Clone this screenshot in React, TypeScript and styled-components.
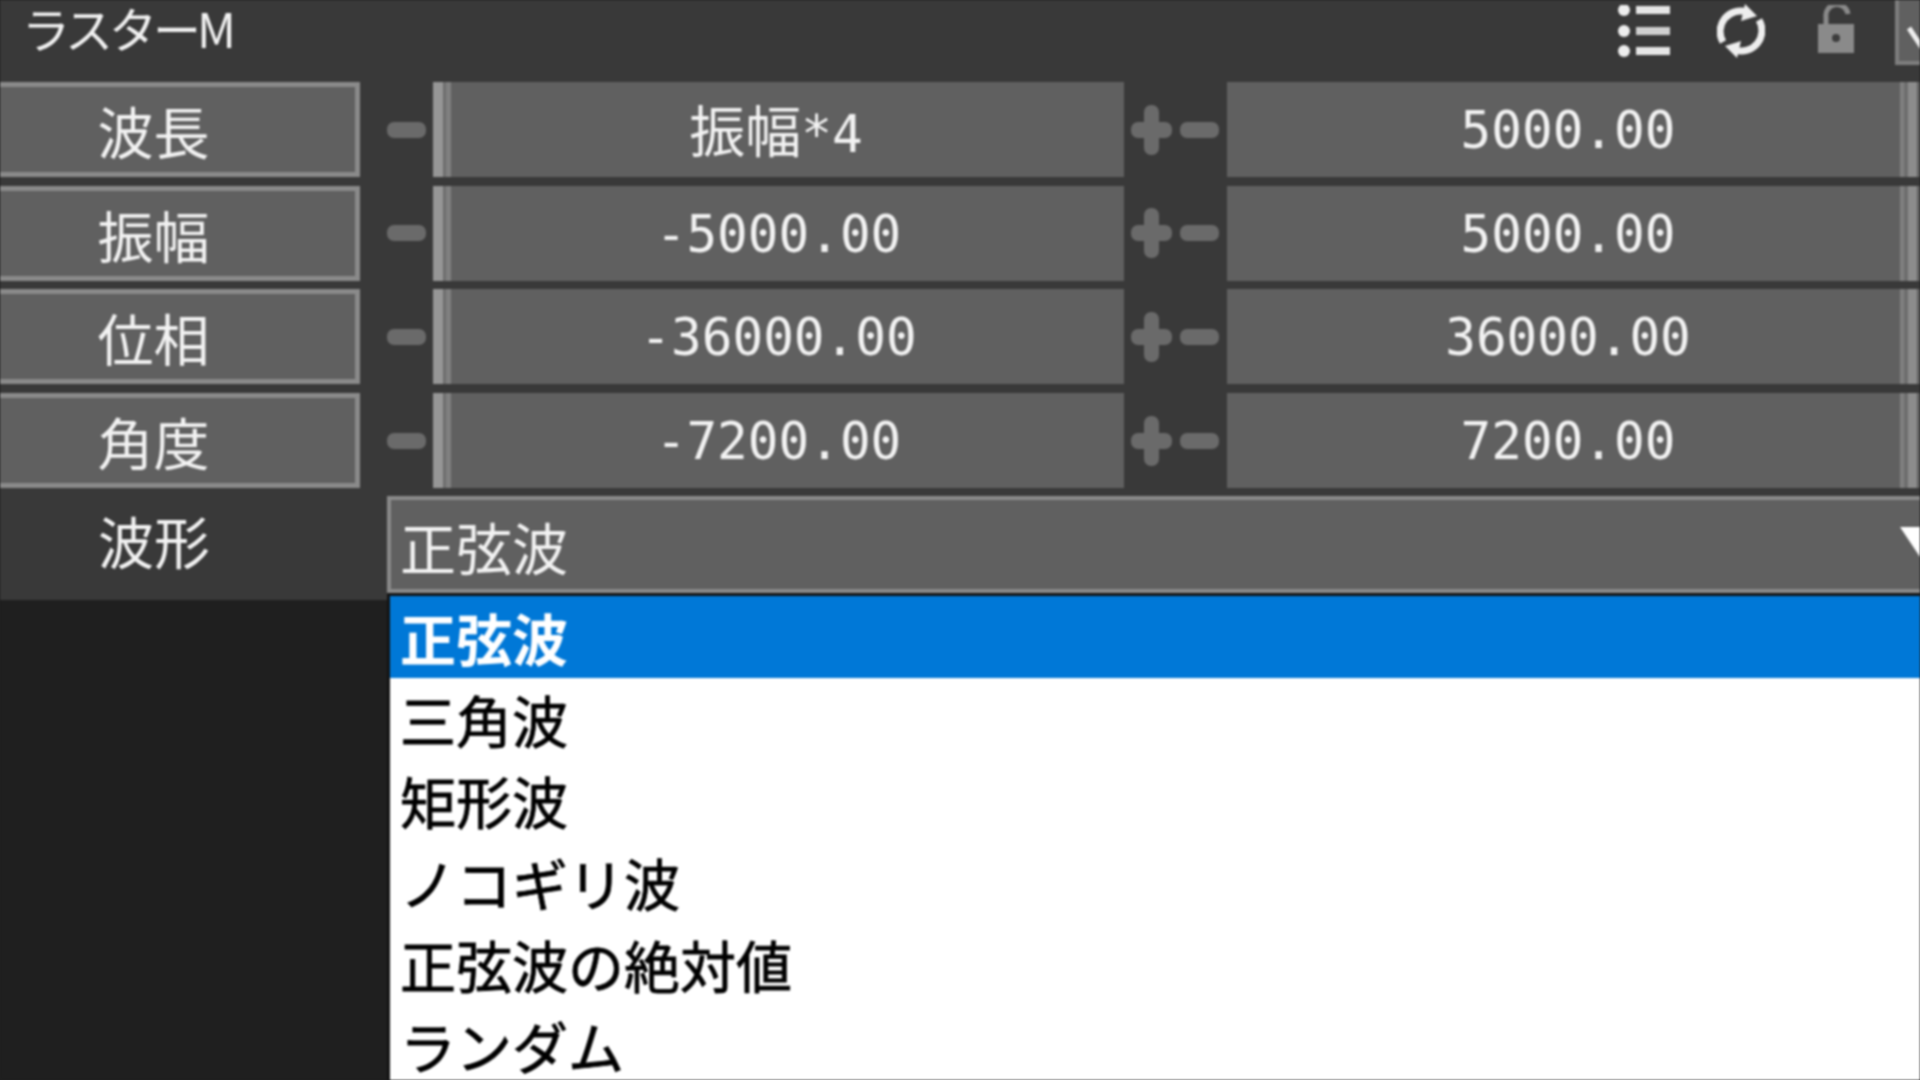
import styled, { createGlobalStyle } from 'styled-components';

const CJK = '"Noto Sans CJK JP", "Noto Sans CJK SC", sans-serif';

const GlobalStyle = createGlobalStyle`
  html, body {
    margin: 0;
    padding: 0;
    background: #1f1f1f;
  }
`;

const RANGES = [
  { name: '波長', min: null, max: '5000.00' },
  { name: '振幅', min: '-5000.00', max: '5000.00' },
  { name: '位相', min: '-36000.00', max: '36000.00' },
  { name: '角度', min: '-7200.00', max: '7200.00' },
];

const WAVES = ['三角波', '矩形波', 'ノコギリ波', '正弦波の絶対値', 'ランダム'];

function ListIcon() {
  return (
    <svg width="52" height="52" viewBox="0 0 52 52">
      <circle cx="6" cy="5" r="6" fill="#eee" />
      <circle cx="6" cy="26" r="6" fill="#eee" />
      <circle cx="6" cy="46" r="6" fill="#eee" />
      <rect x="18" y="1" width="34" height="8" fill="#e6e6e6" />
      <rect x="18" y="22" width="34" height="8" fill="#d0d0d0" />
      <rect x="18" y="42" width="34" height="8" fill="#e6e6e6" />
    </svg>
  );
}

function RefreshIcon() {
  return (
    <svg width="48" height="54" viewBox="0 0 48 54">
      <path d="M6 38 A20.5 20.5 0 0 1 30 8" fill="none" stroke="#eee" strokeWidth="7" />
      <path d="M42 16 A20.5 20.5 0 0 1 18 46" fill="none" stroke="#eee" strokeWidth="7" />
      <path d="M28 0 L40 12 L24 17 Z" fill="#eee" />
      <path d="M20 54 L8 42 L24 37 Z" fill="#eee" />
    </svg>
  );
}

function LockIcon() {
  return (
    <svg width="36" height="48" viewBox="0 0 36 48">
      <path d="M8 20 V12 A11 11 0 0 1 30 9" fill="none" stroke="#8a8a8a" strokeWidth="5" />
      <path d="M0 19 H36 V48 H0 Z" fill="#8a8a8a" />
      <circle cx="18" cy="33" r="4" fill="#3c3c3c" />
    </svg>
  );
}

function PlusIcon() {
  return (
    <svg width="41" height="50" viewBox="0 0 41 50">
      <rect x="0" y="17" width="41" height="16" rx="7" fill="#6a6a6a" />
      <rect x="13" y="0" width="15" height="50" rx="7" fill="#6a6a6a" />
    </svg>
  );
}

function App() {
  return (
    <>
      <GlobalStyle />
      <Page>
        <Panel>
          <TitleBar>
            <Title>ラスターM</Title>
            <Tools>
              <ListIcon />
              <RefreshIcon />
              <LockIcon />
              <CheckBox>
                <svg width="25" height="61" viewBox="0 0 25 61">
                  <path d="M10 28 L22 46 L32 28" fill="none" stroke="#eee" strokeWidth="5" />
                </svg>
              </CheckBox>
            </Tools>
          </TitleBar>
          <Rows>
            {RANGES.map(range => (
              <Row key={range.name}>
                <RowLabel>{range.name}</RowLabel>
                <LeftStep>
                  <Minus />
                </LeftStep>
                <MinTrack>
                  {range.min ? <Value>{range.min}</Value> : (
                    <FormulaValue>
                      <CjkPart>振幅</CjkPart>*4
                    </FormulaValue>
                  )}
                </MinTrack>
                <MidStep>
                  <PlusIcon />
                  <Minus />
                </MidStep>
                <MaxTrack>
                  <Value>{range.max}</Value>
                </MaxTrack>
              </Row>
            ))}
          </Rows>
          <WaveRow>
            <WaveLabel>波形</WaveLabel>
            <WaveSelect>
              <span>正弦波</span>
              <Arrow />
            </WaveSelect>
          </WaveRow>
        </Panel>
        <Dropdown>
          <Option $selected>正弦波</Option>
          {WAVES.map(wave => (
            <Option key={wave}>{wave}</Option>
          ))}
        </Dropdown>
      </Page>
    </>
  );
}

export default App;

const Page = styled.div`
  position: relative;
  width: 1920px;
  height: 1080px;
  overflow: hidden;
  background: #1f1f1f;
  filter: blur(1.1px);
`;

const Panel = styled.div`
  display: flex;
  flex-direction: column;
  background: #393939;
`;

const TitleBar = styled.div`
  display: flex;
  justify-content: space-between;
  height: 82px;
  padding-left: 22px;
`;

const Title = styled.div`
  font-family: ${CJK};
  font-size: 48px;
  line-height: 54px;
  letter-spacing: -4px;
  color: #f2f2f2;
`;

const Tools = styled.div`
  display: flex;
  align-items: flex-start;
  padding-top: 4px;

  & > svg:nth-child(1) {
    margin-top: 1px;
  }
  & > svg:nth-child(2) {
    margin-left: 47px;
  }
  & > svg:nth-child(3) {
    margin-left: 53px;
    margin-top: 1px;
  }
`;

const CheckBox = styled.div`
  margin: -4px 0 0 41px;
  width: 25px;
  height: 65px;
  box-sizing: border-box;
  background: #606060;
  border: solid #7e7e7e;
  border-width: 0 0 4px 4px;
  overflow: hidden;
`;

const Rows = styled.div`
  display: flex;
  flex-direction: column;
  gap: 8.7px;
`;

const Row = styled.div`
  display: flex;
  height: 95px;
`;

const RowLabel = styled.div`
  box-sizing: border-box;
  width: 360px;
  padding-right: 48px;
  display: flex;
  align-items: center;
  justify-content: center;
  background: #606060;
  border: solid #8a8a8a;
  border-width: 5px 5px 5px 0;
  font-family: ${CJK};
  font-size: 56px;
  color: #f2f2f2;
`;

const LeftStep = styled.div`
  box-sizing: border-box;
  width: 73px;
  padding-left: 27px;
  display: flex;
  align-items: center;
`;

const Minus = styled.div`
  width: 39px;
  height: 16px;
  border-radius: 7px;
  background: #6a6a6a;
`;

const MidStep = styled.div`
  box-sizing: border-box;
  width: 103px;
  padding-left: 7px;
  display: flex;
  align-items: center;
  gap: 8px;
`;

const Track = styled.div`
  height: 95px;
  display: flex;
  align-items: center;
  justify-content: center;
  background-color: #606060;
  background-repeat: no-repeat;
`;

const MinTrack = styled(Track)`
  width: 691px;
  background-image: linear-gradient(
    to right,
    #969696 0 10px,
    #6e6e6e 10px 13px,
    #808080 13px 18px,
    transparent 18px
  );
`;

const MaxTrack = styled(Track)`
  flex: 1;
  padding-right: 11px;
  background-image: linear-gradient(
    to left,
    transparent 3px,
    #8c8c8c 3px 12px,
    #6e6e6e 12px 16px,
    #808080 16px 20px,
    transparent 20px
  );
`;

const Value = styled.div`
  padding-top: 2px;
  font-family: "DejaVu Sans Mono", ${CJK};
  font-size: 51px;
  color: #f2f2f2;
  white-space: nowrap;
`;

const FormulaValue = styled(Value)`
  padding: 0 5px 4px 0;
`;

const CjkPart = styled.span`
  font-family: ${CJK};
  font-size: 56px;
`;

const WaveRow = styled.div`
  display: flex;
  box-sizing: border-box;
  height: 112px;
  padding-top: 8px;
`;

const WaveLabel = styled.div`
  width: 387px;
  box-sizing: border-box;
  padding-left: 98px;
  font-family: ${CJK};
  font-size: 56px;
  line-height: 87px;
  color: #f2f2f2;
`;

const WaveSelect = styled.div`
  position: relative;
  flex: 1;
  height: 97px;
  box-sizing: border-box;
  padding-left: 9px;
  background: #606060;
  border: solid #8a8a8a;
  border-width: 4px 0 4px 4px;
  font-family: ${CJK};
  font-size: 56px;
  line-height: 92px;
  color: #f2f2f2;
`;

const Arrow = styled.div`
  position: absolute;
  top: 27px;
  right: -20px;
  width: 0;
  height: 0;
  border-left: 20px solid transparent;
  border-right: 20px solid transparent;
  border-top: 30px solid #fff;
`;

const Dropdown = styled.div`
  position: absolute;
  left: 390px;
  right: 0;
  top: 596px;
  bottom: 0;
  background: #fff;
  box-shadow: 0 0 0 3px #141414;
`;

const Option = styled.div<{ $selected?: boolean }>`
  box-sizing: border-box;
  height: 81.7px;
  padding: 10px 0 0 10px;
  background: ${props => (props.$selected ? '#0078d7' : '#fff')};
  font-family: ${CJK};
  font-size: 56px;
  font-weight: ${props => (props.$selected ? 700 : 400)};
  -webkit-text-stroke: ${props => (props.$selected ? '0' : '0.8px #000')};
  line-height: 62px;
  color: ${props => (props.$selected ? '#fff' : '#000')};
  white-space: nowrap;
`;
